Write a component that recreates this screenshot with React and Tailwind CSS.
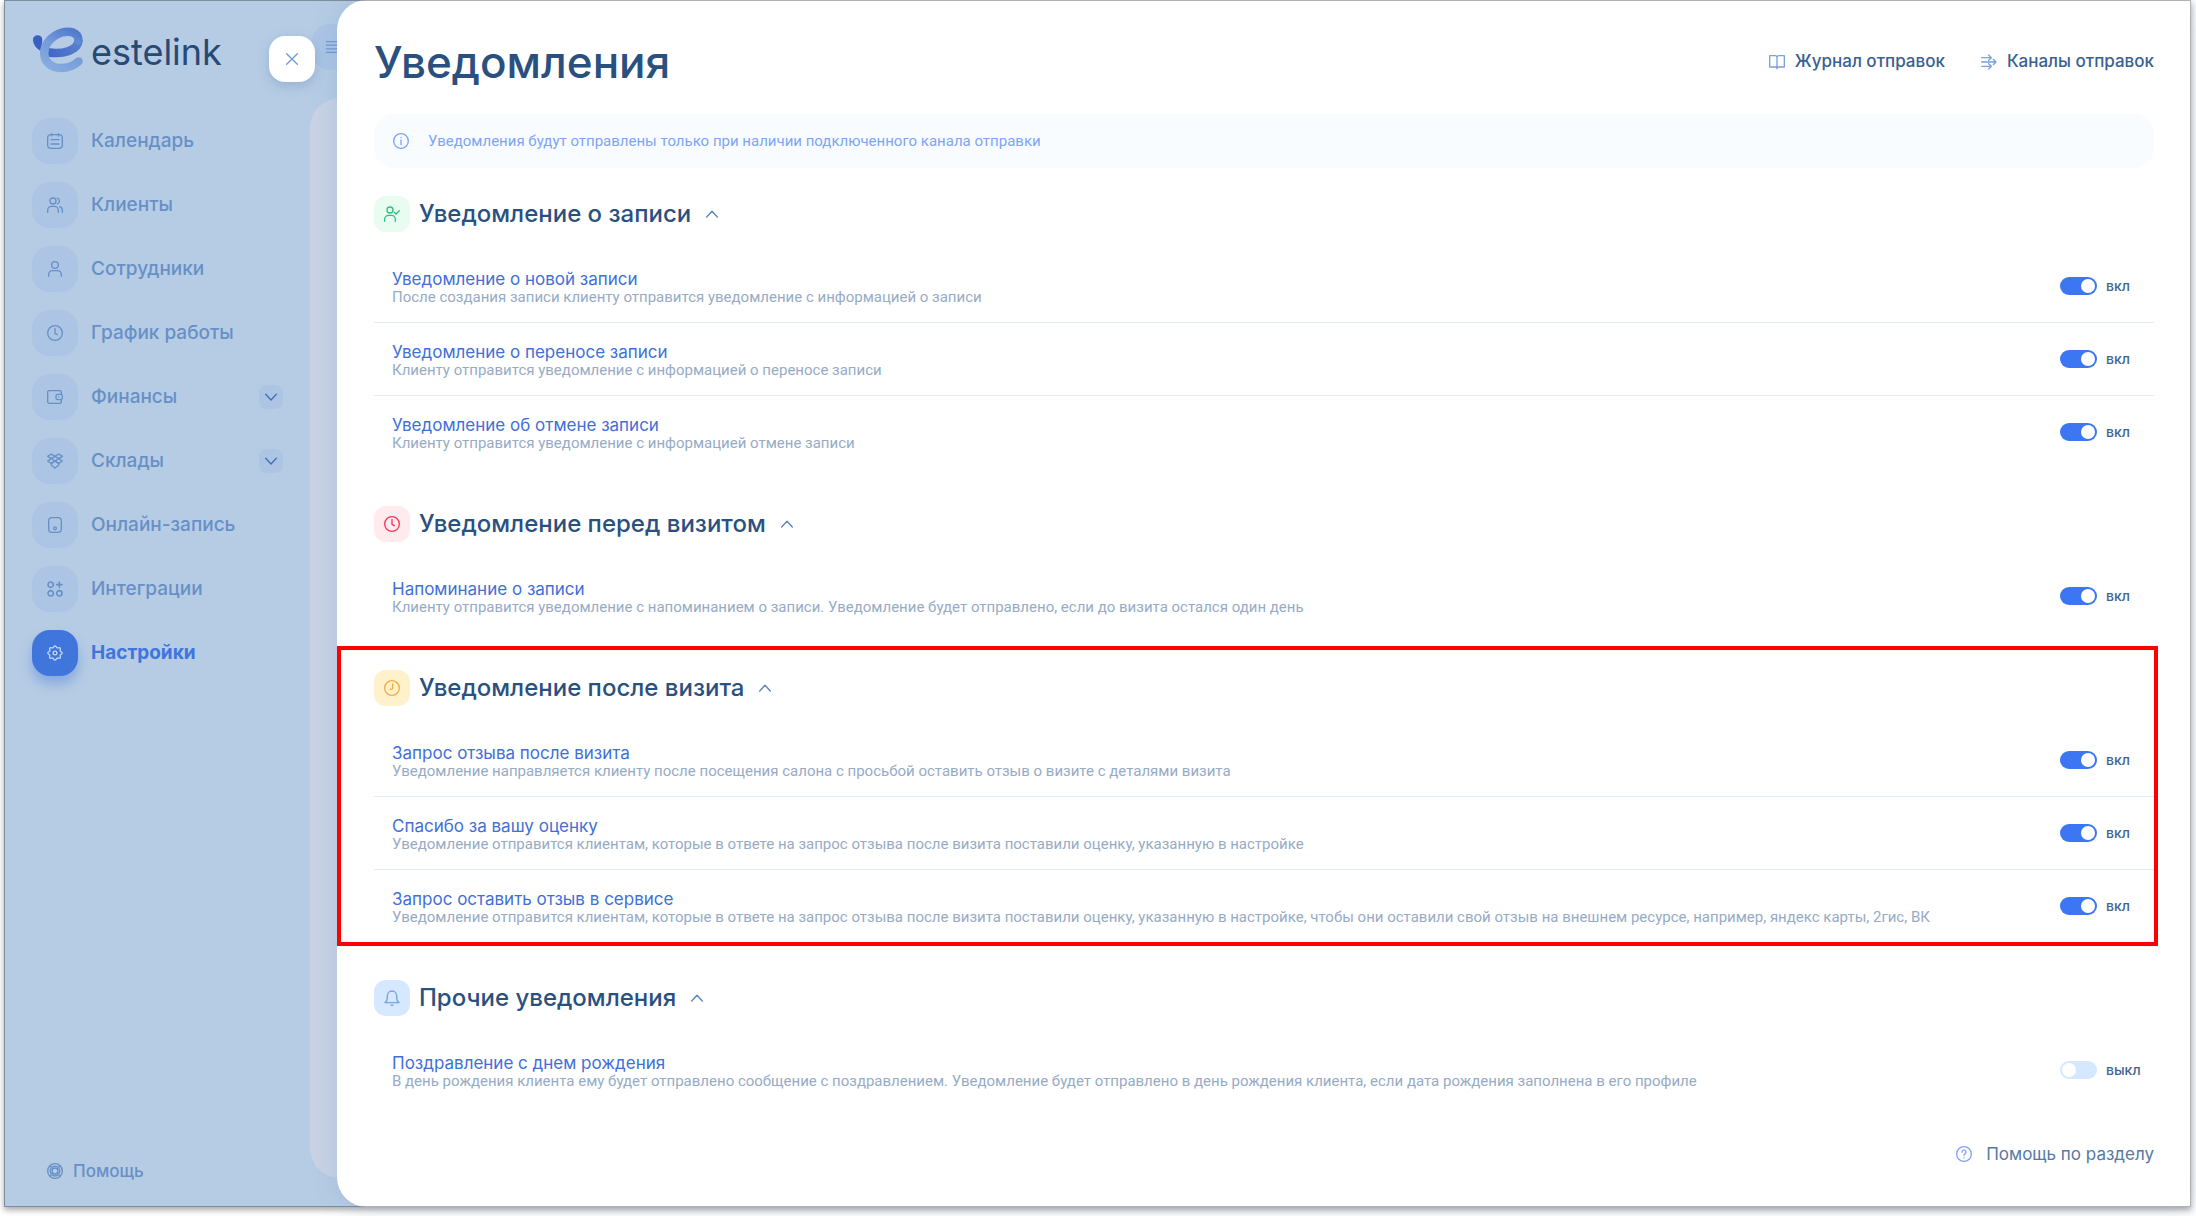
import { useState } from "react";

const Icon = ({ children, className = "w-4 h-4", strokeWidth = 2 }) => (
  <svg
    className={`shrink-0 ${className}`}
    viewBox="0 0 24 24"
    fill="none"
    stroke="currentColor"
    strokeWidth={strokeWidth}
    strokeLinecap="round"
    strokeLinejoin="round"
    aria-hidden="true"
  >
    {children}
  </svg>
);

const CalendarIcon = () => (
  <Icon>
    <rect x="1" y="2.5" width="22" height="20.5" rx="5" />
    <path d="M7 1v3.4M17 1v3.4M6 10h12M6 16.5h12" />
  </Icon>
);

const ClientsIcon = () => (
  <Icon>
    <circle cx="9" cy="6" r="4.5" />
    <path d="M1 23v-3a6 6 0 0 1 6-6h4a6 6 0 0 1 6 6v3M15.5 1.7a4.5 4.5 0 0 1 0 8.6M19 14.4a5.5 5.5 0 0 1 4 5.6v3" />
  </Icon>
);

const UserIcon = () => (
  <Icon>
    <circle cx="12" cy="6" r="5" />
    <path d="M2.5 23v-3A5.5 5.5 0 0 1 8 14.500h8a5.500 5.500 0 0 1 5.500 5.500v3" />
  </Icon>
);

const ClockIcon = () => (
  <Icon>
    <circle cx="12" cy="12" r="11" />
    <path d="M12 5v7.500l3.500 2" />
  </Icon>
);

const ClockAfterIcon = () => (
  <Icon>
    <circle cx="12" cy="12" r="11" />
    <path d="M13 6v6.5c0 1-2 1.5-4 1.5" />
  </Icon>
);

const WalletIcon = () => (
  <Icon>
    <path d="M21.5 8V5A2.500 2.500 0 0 0 19 2.500H3a2 2 0 0 0-2 2V19a2.500 2.500 0 0 0 2.500 2.500H19a2.500 2.500 0 0 0 2.500-2.500v-3" />
    <rect x="13.5" y="8" width="9.5" height="8" rx="2.5" />
    <path d="M17.5 12h.1" />
  </Icon>
);

const StockIcon = () => (
  <Icon>
    <path d="M6.5 1.5 12 5 6.500 8.500 1 5ZM17.500 1.500 23 5l-5.500 3.500L12 5ZM6.500 8.500 12 12l-5.500 3.500L1 12ZM17.500 8.500 23 12l-5.500 3.500L12 12Z" />
    <path d="M6.5 15.500 12 12l5.500 3.500v3L12 22.500l-5.500-4Z" />
  </Icon>
);

const DeviceIcon = () => (
  <Icon>
    <rect x="2.5" y="1" width="19" height="22" rx="5" />
    <circle cx="12" cy="17" r="2.2" />
  </Icon>
);

const IntegrationsIcon = () => (
  <Icon strokeWidth={2.4}>
    <circle cx="5.5" cy="5.5" r="4" />
    <circle cx="5.5" cy="18.5" r="4" />
    <circle cx="18.5" cy="18.5" r="4" />
    <path d="M18.5 1.500v8M14.500 5.500h8" />
  </Icon>
);

const GearIcon = () => (
  <Icon>
    <path d="M12 1.200c1.600 0 2 2.600 3.300 3.100 1.300.6 3.400-1 4.500.1s-.6 3.200 0 4.500c.5 1.300 3 1.500 3 3.100s-2.500 1.800-3 3.100c-.6 1.300 1 3.400 0 4.500s-3.200-.5-4.500 0c-1.300.6-1.700 3.200-3.300 3.200s-2-2.600-3.300-3.200c-1.300-.5-3.400 1.100-4.500 0s.6-3.200 0-4.500c-.5-1.300-3-1.500-3-3.100s2.500-1.800 3-3.100c.6-1.300-1-3.400 0-4.500s3.200.5 4.500-.1C10 3.800 10.400 1.200 12 1.200Z" />
    <circle cx="12" cy="12" r="2.8" />
  </Icon>
);

const HelpRingIcon = () => (
  <Icon>
    <circle cx="12" cy="12" r="11" />
    <circle cx="12" cy="12" r="4.5" />
    <path d="m4.500 4.500 4.300 4.300M19.500 4.500l-4.300 4.300M4.500 19.500l4.300-4.300M19.500 19.500l-4.300-4.300M8.500 5.500q3.500-1.500 7 0M8.500 18.500q3.500 1.500 7 0M5.500 8.500q-1.500 3.500 0 7M18.500 8.500q1.500 3.500 0 7" />
  </Icon>
);

const UserCheckIcon = () => (
  <Icon>
    <circle cx="9" cy="6" r="4.5" />
    <path d="M1 23v-3a6 6 0 0 1 6-6h4a6 6 0 0 1 6 6v3M15.5 9.5 18 12l5-5" />
  </Icon>
);

const BellIcon = () => (
  <Icon>
    <path d="M1.5 19C4 17.500 5 15.500 5 12V8.500a7 7 0 0 1 14 0V12c0 3.500 1 5.500 3.500 7ZM10.500 22.500c1 .8 2 .8 3 0" />
  </Icon>
);

const BookIcon = () => (
  <Icon>
    <path d="M12 5.500c0-2-1-3-3-3H1v17h8.500c1.500 0 2.500.7 2.500 2.500M12 5.500c0-2 1-3 3-3h8v17h-8.500c-1.500 0-2.500.7-2.500 2.500V5.500" />
  </Icon>
);

const ChannelsIcon = () => (
  <Icon>
    <path d="M1 5.500h14M11.500 1.500l4 4-4 4M1 12h21.500M18.500 8l4 4-4 4M1 18.500h14M11.500 14.500l4 4-4 4" />
  </Icon>
);

const InfoIcon = () => (
  <Icon>
    <circle cx="12" cy="12" r="11" />
    <path d="M12 10.500v7M12 6.500v.2" />
  </Icon>
);

const QuestionIcon = () => (
  <Icon>
    <circle cx="12" cy="12" r="11" />
    <path d="M9 9.300a3 3 0 1 1 4.500 2.500c-1 .6-1.500 1-1.500 2.200M12 17.500v.2" />
  </Icon>
);

const Chevron = ({ up = false }) => (
  <Icon strokeWidth={2.2}>
    <path d={up ? "M4 16.500 12 8l8 8.500" : "M4 8l8 8.500L20 8"} />
  </Icon>
);

const Logo = () => (
  <a href="#" className="flex items-center gap-2 text-4xl text-[#264a73]">
    <svg className="w-[50px] h-[46px] shrink-0" viewBox="8 7 50 46" fill="none" strokeLinecap="round" aria-hidden="true">
      <defs>
        <linearGradient id="logo-bar" x1="23" y1="34" x2="56" y2="16" gradientUnits="userSpaceOnUse">
          <stop stopColor="#3f68c6" />
          <stop offset="1" stopColor="#5c83d2" />
        </linearGradient>
        <linearGradient id="logo-body" x1="50" y1="10" x2="30" y2="50" gradientUnits="userSpaceOnUse">
          <stop stopColor="#5079cd" />
          <stop offset=".5" stopColor="#759bd9" />
          <stop offset="1" stopColor="#86abe0" />
        </linearGradient>
      </defs>
      <path d="M8 19.500c0-5 7.500-6 9-1.500.8 3-.3 6-.8 13C11.500 29 8 24.500 8 19.500Z" fill="#3860c2" />
      <path d="M23 32.300C38 35 53.500 30 53.500 20" stroke="url(#logo-bar)" strokeWidth="8.500" strokeLinecap="butt" />
      <path
        d="M53.500 20.500C53.500 12 44 10.500 37 12.500 27 15.500 19.200 24 19.200 33c0 9 7 15 17 15 7 0 13-2.500 17.300-6.500"
        stroke="url(#logo-body)"
        strokeWidth="8.500"
      />
    </svg>
    <span className="pt-1">estelink</span>
  </a>
);

const NAV = [
  { label: "Календарь", icon: CalendarIcon },
  { label: "Клиенты", icon: ClientsIcon },
  { label: "Сотрудники", icon: UserIcon },
  { label: "График работы", icon: ClockIcon },
  { label: "Финансы", icon: WalletIcon, nested: true },
  { label: "Склады", icon: StockIcon, nested: true },
  { label: "Онлайн-запись", icon: DeviceIcon },
  { label: "Интеграции", icon: IntegrationsIcon },
  { label: "Настройки", icon: GearIcon, active: true },
];

const SECTIONS = [
  {
    title: "Уведомление о записи",
    icon: UserCheckIcon,
    badge: "bg-[#e8fdf0] text-[#2cc283]",
    items: [
      {
        title: "Уведомление о новой записи",
        text: "После создания записи клиенту отправится уведомление с информацией о записи",
        on: true,
      },
      {
        title: "Уведомление о переносе записи",
        text: "Клиенту отправится уведомление с информацией о переносе записи",
        on: true,
      },
      {
        title: "Уведомление об отмене записи",
        text: "Клиенту отправится уведомление с информацией отмене записи",
        on: true,
      },
    ],
  },
  {
    title: "Уведомление перед визитом",
    icon: ClockIcon,
    badge: "bg-[#ffebee] text-[#f5365c]",
    items: [
      {
        title: "Напоминание о записи",
        text: "Клиенту отправится уведомление с напоминанием о записи. Уведомление будет отправлено, если до визита остался один день",
        on: true,
      },
    ],
  },
  {
    title: "Уведомление после визита",
    icon: ClockAfterIcon,
    badge: "bg-[#fff1cc] text-[#f0ae3c]",
    highlighted: true,
    items: [
      {
        title: "Запрос отзыва после визита",
        text: "Уведомление направляется клиенту после посещения салона с просьбой оставить отзыв о визите с деталями визита",
        on: true,
      },
      {
        title: "Спасибо за вашу оценку",
        text: "Уведомление отправится клиентам, которые в ответе на запрос отзыва после визита поставили оценку, указанную в настройке",
        on: true,
      },
      {
        title: "Запрос оставить отзыв в сервисе",
        text: "Уведомление отправится клиентам, которые в ответе на запрос отзыва после визита поставили оценку, указанную в настройке, чтобы они оставили свой отзыв на внешнем ресурсе, например, яндекс карты, 2гис, ВК",
        on: true,
      },
    ],
  },
  {
    title: "Прочие уведомления",
    icon: BellIcon,
    badge: "bg-[#d6e8ff] text-[#78a3dc]",
    items: [
      {
        title: "Поздравление с днем рождения",
        text: "В день рождения клиента ему будет отправлено сообщение с поздравлением. Уведомление будет отправлено в день рождения клиента, если дата рождения заполнена в его профиле",
        on: false,
      },
    ],
  },
];

const NavItem = ({ item }) => {
  const ItemIcon = item.icon;
  return (
    <li className="flex items-center justify-between">
      <a
        href="#"
        className={`flex items-center gap-[13px] text-[19px] ${
          item.active ? "font-bold text-[#4075dc]" : "font-medium text-[#6790c6]"
        }`}
      >
        <span
          className={`flex items-center justify-center w-[46px] h-[46px] rounded-[18px] ${
            item.active
              ? "bg-[#4075dc] text-[#c3d7f5] shadow-[0_8px_12px_rgba(64,117,220,0.4)]"
              : "bg-[#acc5e5] text-[#6790c6]"
          }`}
        >
          <ItemIcon />
        </span>
        {item.label}
      </a>
      {item.nested && (
        <button
          aria-label={item.label}
          className="flex items-center justify-center w-6 h-6 rounded-lg bg-[#acc5e5] text-[#4a74b0]"
        >
          <Chevron />
        </button>
      )}
    </li>
  );
};

const NotificationRow = ({ item }) => {
  const [on, setOn] = useState(item.on);

  return (
    <li className="flex items-center justify-between h-[73px] pl-[18px] border-b border-[#e4edf7] last:border-transparent">
      <div className="pt-[3px]">
        <a href="#" className="block text-[17px] leading-[18px] text-[#416fd8]">{item.title}</a>
        <p className="font-['Roboto',sans-serif] text-[15px] leading-[18px] text-[#97abc5]">{item.text}</p>
      </div>
      <label className="flex items-center gap-[9px] w-[94px] shrink-0 text-sm font-medium text-[#3f6590] cursor-pointer">
        <input
          type="checkbox"
          role="switch"
          aria-label={item.title}
          checked={on}
          onChange={(e) => setOn(e.target.checked)}
          className="appearance-none flex items-center w-[37px] h-[18px] px-0.5 rounded-full bg-[#d6e8ff] checked:bg-[#3d76f2] checked:justify-end before:w-3.5 before:h-3.5 before:rounded-full before:bg-white cursor-pointer"
        />
        {on ? "вкл" : "выкл"}
      </label>
    </li>
  );
};

const Section = ({ section }) => {
  const [open, setOpen] = useState(true);
  const SectionIcon = section.icon;

  return (
    <section className="relative mb-[37px]">
      {section.highlighted && (
        <div className="absolute -top-6 -bottom-[3px] -left-[37px] -right-1 border-4 border-[#ff0000] pointer-events-none" />
      )}
      <h2 className="mb-[18px]">
        <button
          onClick={() => setOpen(!open)}
          aria-expanded={open}
          className="flex items-center gap-[9px] h-9 text-2xl font-medium text-[#2a5080]"
        >
          <span className={`flex items-center justify-center w-9 h-9 rounded-xl ${section.badge}`}>
            <SectionIcon />
          </span>
          {section.title}
          <span className="ml-1 text-[#5f88bb]">
            <Chevron up={open} />
          </span>
        </button>
      </h2>
      {open && (
        <ul>
          {section.items.map((item) => (
            <NotificationRow key={item.title} item={item} />
          ))}
        </ul>
      )}
    </section>
  );
};

const App = () => (
  <div className="flex flex-col min-h-screen bg-white pl-1 pr-[5px] pb-[9px] font-['Inter',sans-serif]">
    <div className="relative flex flex-1 bg-[#b6cce4] shadow-[0_3px_6px_rgba(0,0,0,0.35)]">
      <aside className="flex flex-col w-[306px] shrink-0 pt-[27px] pl-7 pr-[27px] pb-[26px]">
        <div className="pl-px">
          <Logo />
        </div>
        <nav className="mt-[45px]">
          <ul className="flex flex-col gap-[18px]">
            {NAV.map((item) => (
              <NavItem key={item.label} item={item} />
            ))}
          </ul>
        </nav>
        <a href="#" className="mt-auto ml-[15px] flex items-center gap-2.5 text-[17px] leading-5 font-medium text-[#6790c6]">
          <HelpRingIcon />
          Помощь
        </a>
      </aside>

      {/* Page behind the drawer */}
      <div className="flex flex-col w-[60px] shrink-0 pt-6 pb-[29px]">
        <button
          aria-label="Меню"
          className="flex items-center justify-center w-[46px] h-[46px] ml-0.5 mb-7 rounded-[18px] bg-[#acc5e5] text-[#6f98d0]"
        >
          <Icon className="w-5 h-4">
            <path d="M-1 4h26M-1 9.300h26M-1 14.700h26M-1 20h26" />
          </Icon>
        </button>
        <div className="flex-1 rounded-l-[30px] bg-[#c8d3e4]" />
      </div>

      {/* Drawer */}
      <main className="relative flex-1 min-w-0 -ml-[33px] pt-[38px] px-[37px] pb-10 rounded-l-[30px] bg-white shadow-[0_0_24px_rgba(103,144,198,0.25)]">
        <header className="flex items-center justify-between mb-7">
          <h1 className="text-[44px] leading-[48px] font-medium text-[#2a5080]">Уведомления</h1>
          <div className="flex gap-9 text-[17px] font-medium text-[#3a6090]">
            <a href="#" className="flex items-center gap-2.5">
              <span className="text-[#78a3dc]"><BookIcon /></span>
              Журнал отправок
            </a>
            <a href="#" className="flex items-center gap-2.5">
              <span className="text-[#78a3dc]"><ChannelsIcon /></span>
              Каналы отправок
            </a>
          </div>
        </header>

        <div className="flex items-center gap-[19px] h-[54px] mb-7 px-[19px] rounded-[20px] bg-[#f8fcff] text-[#7ea4f8]">
          <InfoIcon />
          <p className="font-['Roboto',sans-serif] text-[15px]">
            Уведомления будут отправлены только при наличии подключенного канала отправки
          </p>
        </div>

        {SECTIONS.map((section) => (
          <Section key={section.title} section={section} />
        ))}

        <div className="flex justify-end">
          <a href="#" className="flex items-center gap-3.5 text-[17px] leading-5 text-[#557aa5]">
            <span className="text-[#7ea4f8]"><QuestionIcon /></span>
            Помощь по разделу
          </a>
        </div>
      </main>

      <button
        aria-label="Закрыть"
        className="absolute top-9 left-[265px] flex items-center justify-center w-[46px] h-[46px] rounded-2xl bg-white text-[#6f9bd8] shadow-[0_4px_12px_rgba(80,120,180,0.3)]"
      >
        <Icon>
          <path d="M4 4l16 16M20 4 4 20" />
        </Icon>
      </button>

      <div className="absolute inset-0 border border-black/30 pointer-events-none" />
    </div>
  </div>
);

export default App;
